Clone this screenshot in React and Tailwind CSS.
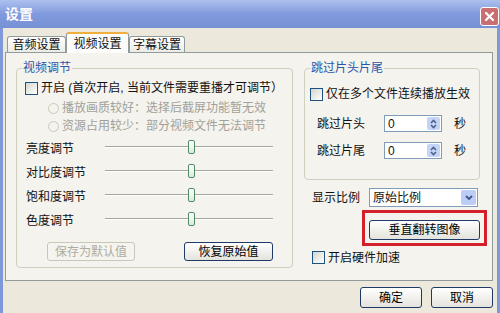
import React from 'react';

const Check = () => (
  <span className="w-[13px] h-[13px] shrink-0 border border-[#1c5180] bg-linear-to-br from-[#d6d6cf] to-white" />
);

const Radio = () => (
  <span className="w-[11px] h-[11px] shrink-0 rounded-full border border-[#cac8bb] bg-[#f4f3ee]" />
);

const XpButton = ({ children, disabled, className = '' }) => (
  <div
    className={`h-[19px] rounded-[3px] border flex items-center justify-center text-[12px] leading-[14px] ${
      disabled
        ? 'border-[#c9c7ba] bg-[#f5f4ef] text-[#aeac9f]'
        : 'border-[#1f3a66] bg-linear-to-b from-white to-[#e4e3dc] text-black'
    } ${className}`}
  >
    {children}
  </div>
);

const Slider = ({ label }) => (
  <div className="h-[24px] flex items-center pl-[9px]">
    <span className="w-[79px] text-[12px] leading-[14px]">{label}</span>
    <div className="relative w-[168px] h-[14px]">
      <div className="absolute left-0 right-0 top-[4px] h-[2px] border-t border-[#a5a59c] border-b border-b-white" />
      <div className="absolute left-[83px] top-[-2px] w-[7px] h-[14px] rounded-[2px] border border-[#4f8a63] bg-linear-to-b from-white to-[#dde9df]" />
    </div>
  </div>
);

const Spin = () => (
  <div className="w-[58px] h-[17px] border border-[#7f9db9] bg-white flex items-center">
    <span className="flex-1 pl-[3px] text-[12px] leading-[14px] font-['Liberation_Sans',sans-serif]">0</span>
    <div className="w-[13px] h-[13px] mr-[1px] rounded-[2px] bg-[#c4d3f8] flex items-center justify-center">
      <svg width="9" height="12" viewBox="0 0 9 12">
        <path d="M2 5 L4.5 2.5 L7 5" fill="none" stroke="#4d6185" strokeWidth="1.6" />
        <path d="M2 7 L4.5 9.5 L7 7" fill="none" stroke="#4d6185" strokeWidth="1.6" />
      </svg>
    </div>
  </div>
);

const Group = ({ title, className = '', children }) => (
  <div className={`relative border border-[#d0d0bf] rounded-[4px] ${className}`}>
    <span className="absolute left-[5px] top-[-8px] px-[1px] bg-[#f4f3ee] text-[12px] leading-[14px] text-[#2d55a8]">
      {title}
    </span>
    {children}
  </div>
);

export default function App() {
  return (
    <div className="w-[500px] h-[313px] overflow-hidden bg-[#ece9dc] flex flex-col font-['Liberation_Sans','Noto_Sans_CJK_SC',sans-serif] text-[#111]">
      {/* title bar */}
      <div className="h-[28px] shrink-0 flex items-center justify-between pl-[5px] pr-[1px] bg-linear-to-b from-[#adc0ee] via-[#819add] to-[#7791d6]">
        <span className="text-[14px] leading-[16px] font-bold text-white">设置</span>
        <div className="w-[19px] h-[19px] mt-[4px] rounded-[3px] border border-white bg-[#c96f72] flex items-center justify-center">
          <svg width="11" height="11" viewBox="0 0 11 11">
            <path d="M2 2 L9 9 M9 2 L2 9" stroke="white" strokeWidth="2.2" strokeLinecap="round" />
          </svg>
        </div>
      </div>

      <div className="flex-1 flex flex-col border-l-[3px] border-r-[3px] border-[#7f98d9] pl-[2px] pr-[2px]">
        {/* tabs */}
        <div className="h-[20px] mt-[4px] flex items-end pl-[2px]">
          <div className="w-[59px] h-[16px] border border-b-0 border-[#919b9c] rounded-t-[3px] bg-linear-to-b from-white to-[#ecebe5] flex items-center justify-center text-[12px] leading-[14px]">
            音频设置
          </div>
          <div className="w-[63px] h-[21px] border border-b-0 border-[#919b9c] border-t-[2px] border-t-[#f0b040] rounded-t-[3px] bg-[#fcfcfa] flex items-center justify-center text-[12px] leading-[14px] relative top-[1px]">
            视频设置
          </div>
          <div className="w-[56px] h-[16px] border border-b-0 border-[#919b9c] rounded-t-[3px] bg-linear-to-b from-white to-[#ecebe5] flex items-center justify-center text-[12px] leading-[14px]">
            字幕设置
          </div>
        </div>

        {/* panel */}
        <div className="h-[229px] w-[488px] border border-[#919b9c] bg-[#f4f3ee] flex pl-[10px] pt-[15px]">
          <Group title="视频调节" className="w-[277px] h-[200px]">
            <div className="flex items-center h-[14px] mt-[12px] pl-[8px] gap-[3px] text-[12px] leading-[14px]">
              <Check />
              <span>开启 (首次开启, 当前文件需要重播才可调节）</span>
            </div>
            <div className="flex items-center h-[14px] mt-[6px] pl-[31px] gap-[3px] text-[12px] leading-[14px] text-[#a3a197]">
              <Radio />
              <span>播放画质较好：选择后截屏功能暂无效</span>
            </div>
            <div className="flex items-center h-[14px] mt-[4px] pl-[31px] gap-[3px] text-[12px] leading-[14px] text-[#a3a197]">
              <Radio />
              <span>资源占用较少：部分视频文件无法调节</span>
            </div>
            <div className="mt-[4px]">
              <Slider label="亮度调节" />
              <Slider label="对比度调节" />
              <Slider label="饱和度调节" />
              <Slider label="色度调节" />
            </div>
            <div className="flex mt-[9px] pl-[30px] gap-[49px]">
              <XpButton disabled className="w-[88px]">保存为默认值</XpButton>
              <XpButton className="w-[89px]">恢复原始值</XpButton>
            </div>
          </Group>

          <div className="ml-[11px] w-[176px] flex flex-col">
            <Group title="跳过片头片尾" className="h-[112px]">
              <div className="flex items-center h-[14px] mt-[18px] pl-[5px] gap-[3px] text-[12px] leading-[14px]">
                <Check />
                <span>仅在多个文件连续播放生效</span>
              </div>
              <div className="flex items-center h-[17px] mt-[14px] pl-[12px] text-[12px] leading-[14px]">
                <span className="w-[67px]">跳过片头</span>
                <Spin />
                <span className="ml-[12px]">秒</span>
              </div>
              <div className="flex items-center h-[17px] mt-[10px] pl-[12px] text-[12px] leading-[14px]">
                <span className="w-[67px]">跳过片尾</span>
                <Spin />
                <span className="ml-[12px]">秒</span>
              </div>
            </Group>

            <div className="flex items-center h-[19px] mt-[8px] pl-[8px] text-[12px] leading-[14px]">
              <span className="w-[57px]">显示比例</span>
              <div className="w-[109px] h-[19px] border border-[#7f9db9] bg-white flex items-center">
                <span className="flex-1 pl-[3px]">原始比例</span>
                <div className="w-[15px] h-[15px] mr-[1px] rounded-[2px] bg-[#bccdf6] flex items-center justify-center">
                  <svg width="10" height="8" viewBox="0 0 10 8">
                    <path d="M2 2 L5 5 L8 2" fill="none" stroke="#3d5688" strokeWidth="1.8" />
                  </svg>
                </div>
              </div>
            </div>

            <div className="ml-[58px] mt-[3px] w-[125px] h-[36px] border-[3px] border-[#d42029] pl-[4px] pt-[7px]">
              <XpButton className="w-[111px] h-[20px]">垂直翻转图像</XpButton>
            </div>

            <div className="flex items-center h-[13px] mt-[5px] pl-[8px] gap-[3px] text-[12px] leading-[14px]">
              <Check />
              <span>开启硬件加速</span>
            </div>
          </div>
        </div>

        {/* bottom buttons */}
        <div className="flex justify-end gap-[9px] mt-[6px] pr-[2px]">
          <XpButton className="w-[62px] h-[21px]">确定</XpButton>
          <XpButton className="w-[62px] h-[21px]">取消</XpButton>
        </div>
      </div>
    </div>
  );
}
